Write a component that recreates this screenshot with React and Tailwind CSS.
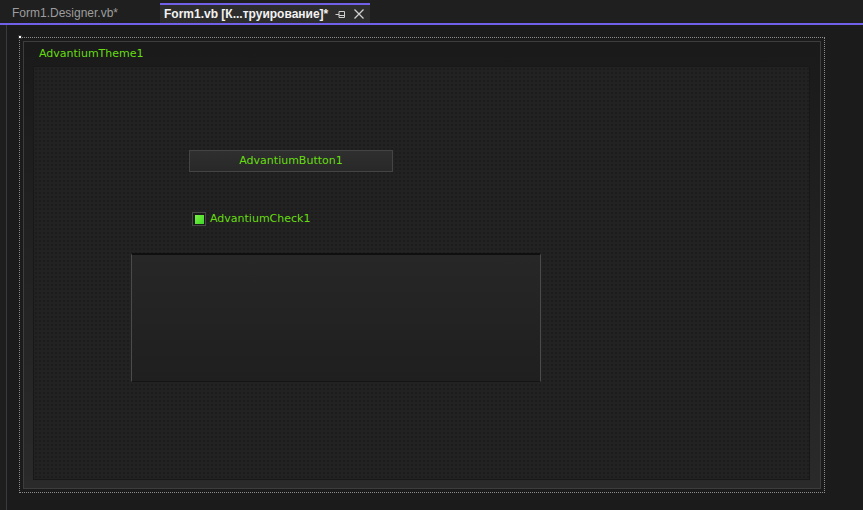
import React from "react";

function PinIcon() {
  return (
    <svg width="11" height="9" viewBox="0 0 11 9" className="text-[#d0d0d0]">
      <path d="M0.5 4.5H4M4 1.5V7.5M4 1.5H9.5V7.5H4M4 5.5H9.5" stroke="currentColor" fill="none" strokeWidth="1" />
    </svg>
  );
}

function CloseIcon() {
  return (
    <svg width="10" height="10" viewBox="0 0 10 10" className="text-[#d0d0d0]">
      <path d="M0.5 0.5L9.5 9.5M9.5 0.5L0.5 9.5" stroke="currentColor" strokeWidth="1.3" />
    </svg>
  );
}

export default function App() {
  return (
    <div className="w-[863px] h-[510px] bg-[#1e1e1e] overflow-hidden flex flex-col font-['Liberation_Sans',sans-serif]">
      {/* tabs */}
      <div className="h-[23px] flex items-end bg-[#1f1f1f]">
        <div className="w-[160px] h-[20px] pl-[12px] flex items-center text-[12px] text-[#9d9d9d]">
          Form1.Designer.vb*
        </div>
        <div className="w-[210px] h-[20px] bg-[#2d2d2d] border-t-2 border-[#7160e8] pl-[4px] pr-[6px] flex items-center">
          <span className="text-[12px] font-bold text-[#f2f2f2]">
            Form1.vb [К...труирование]*
          </span>
          <span className="ml-auto flex items-center gap-[8px]">
            <PinIcon />
            <CloseIcon />
          </span>
        </div>
      </div>
      <div className="h-[2px] bg-[#7160e8]" />

      {/* designer surface */}
      <div className="flex-1 flex pl-[6px]">
        <div className="flex-1 border-l border-[#3a3a3d] bg-[#1b1b1b] pl-[12px] pt-[12px]">
          <div className="relative w-[806px] h-[456px] border border-dotted border-[#8c8c8c] pl-[3px] pt-[3px]">
            <div className="absolute -left-[2px] -top-[3px] w-[4px] h-[4px] bg-white border border-[#333]" />
            {/* theme form */}
            <div className="w-[798px] h-[448px] border border-[#3d3d3d] bg-gradient-to-b from-[#1a1a1a] to-[#2a2a2a] pl-[9px] pr-[10px] pb-[8px] flex flex-col">
              <div className="h-[24px] flex items-center pl-[6px] text-[11px] text-[#66dd11] font-['DejaVu_Sans',sans-serif]">
                AdvantiumTheme1
              </div>
              <div className="flex-1 border border-[#181818] bg-[#222222] bg-[radial-gradient(#1c1c1c_0.7px,transparent_0.8px)] bg-[length:4px_4px] flex flex-col items-start font-['DejaVu_Sans',sans-serif] text-[11px] text-[#66dd11]">
                <div className="ml-[155px] mt-[83px] w-[204px] h-[22px] border border-[#444444] bg-gradient-to-b from-[#2f2f2f] to-[#282828] flex items-center justify-center">
                  AdvantiumButton1
                </div>
                <div className="ml-[158px] mt-[40px] h-[14px] flex items-center gap-[4px]">
                  <div className="w-[14px] h-[14px] border border-[#474747] bg-[#1a1a1a] flex items-center justify-center">
                    <div className="w-[9px] h-[9px] bg-gradient-to-br from-[#78f040] to-[#3bd62a]" />
                  </div>
                  <span>AdvantiumCheck1</span>
                </div>
                <div className="ml-[97px] mt-[27px] w-[410px] h-[129px] border-t-2 border-t-[#0f0f0f] border-l border-l-[#4a4a4a] border-r border-r-[#4a4a4a] border-b border-b-[#141414] bg-gradient-to-b from-[#272727] to-[#1f1f1f]" />
              </div>
            </div>
          </div>
        </div>
      </div>
    </div>
  );
}
